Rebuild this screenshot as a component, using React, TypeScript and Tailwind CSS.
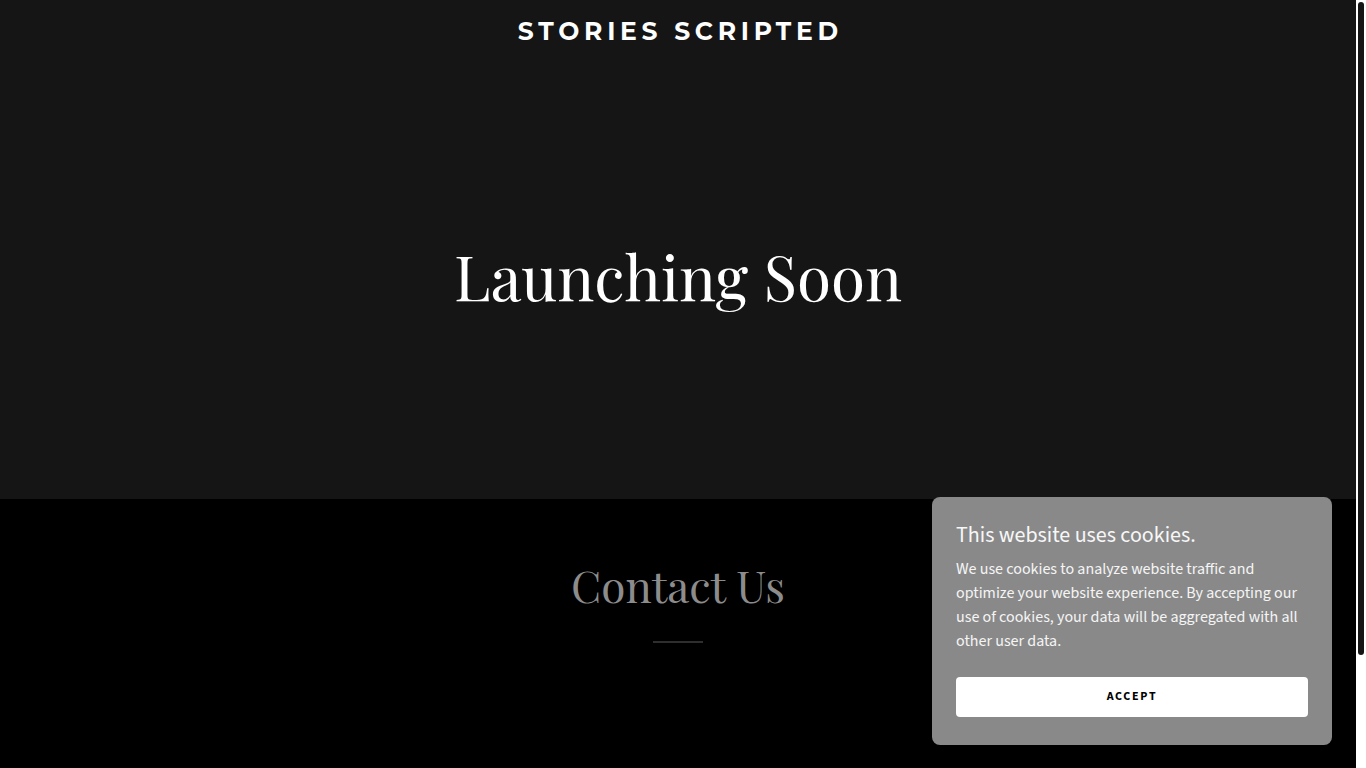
import React from "react";

export default function App() {
  return (
    <div className="relative flex h-[768px] w-[1366px] overflow-hidden bg-black">
      <div className="flex flex-1 flex-col">
        <header className="flex h-[499px] flex-col items-center bg-[#151515]">
          <div
            className="mt-[12px] pl-[0.19em] text-[25px] font-bold leading-[38px] tracking-[0.19em] text-white"
            style={{ fontFamily: "Montserrat, 'Open Sans', 'Liberation Sans', sans-serif" }}
          >
            STORIES SCRIPTED
          </div>
          <h1
            className="mt-[181px] text-[62px] leading-[90px] text-white"
            style={{ fontFamily: "'Playfair Display', 'DejaVu Serif', 'Liberation Serif', serif" }}
          >
            Launching Soon
          </h1>
        </header>
        <section className="flex flex-1 flex-col items-center bg-black">
          <h2
            className="mt-[55px] text-[44px] leading-[62px] text-[#8c8c8c]"
            style={{ fontFamily: "'Playfair Display', 'DejaVu Serif', 'Liberation Serif', serif" }}
          >
            Contact Us
          </h2>
          <div className="mt-[25px] h-[2px] w-[50px] bg-[#2e2e2e]" />
        </section>
      </div>
      <div className="flex w-[10px] flex-col bg-white pt-[2px]">
        <div className="ml-[2px] h-[653px] w-[6px] rounded-full bg-[#151515]" />
      </div>

      <div
        className="absolute left-[932px] top-[497px] w-[400px] rounded-[8px] bg-[#898989] px-[24px] pb-[28px] pt-[21px]"
        style={{ fontFamily: "'Source Sans Pro', 'Source Sans 3', Lato, 'Noto Sans', sans-serif" }}
      >
        <div className="text-[22px] leading-[34px] text-[#f7f7f7]">This website uses cookies.</div>
        <p className="mt-[5px] text-[16px] leading-[24px] text-[#f5f5f5]">
          We use cookies to analyze website traffic and optimize your website experience. By accepting our use of cookies, your data will be aggregated with all other user data.
        </p>
        <button className="mt-[24px] flex h-[40px] w-full items-center justify-center rounded-[4px] bg-white text-[12px] font-bold tracking-[0.14em] text-black">
          ACCEPT
        </button>
      </div>
    </div>
  );
}
